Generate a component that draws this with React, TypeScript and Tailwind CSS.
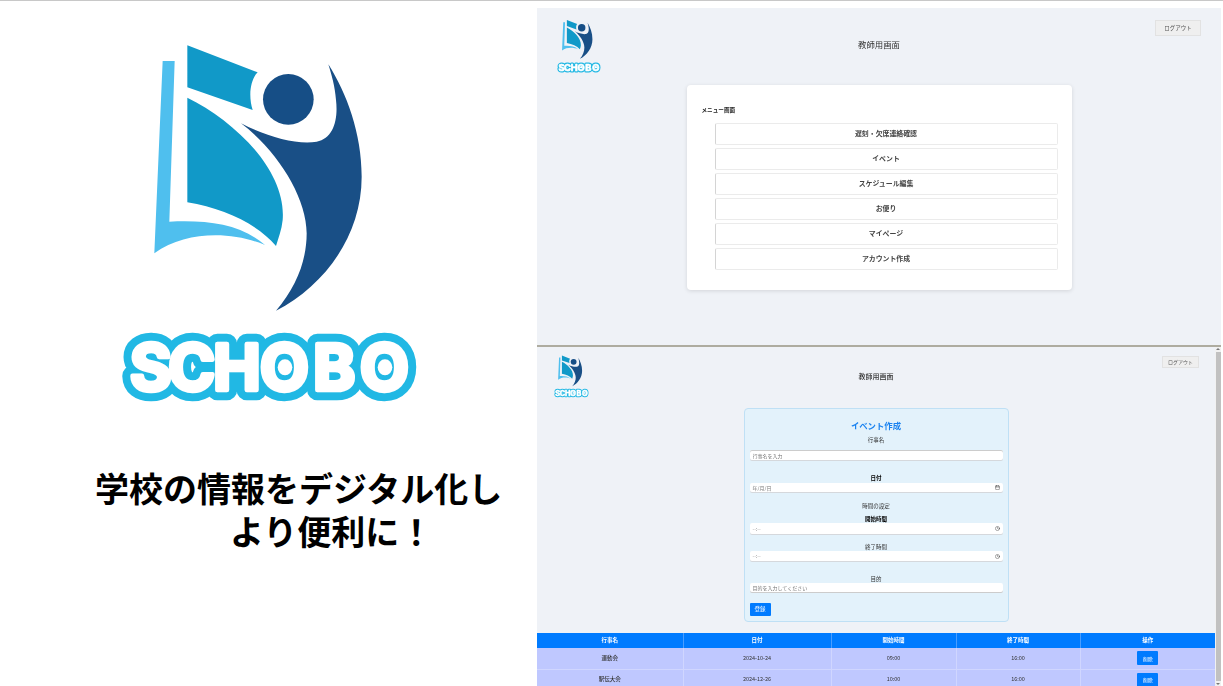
import { Calendar, Clock } from "lucide-react";
import type { ReactNode } from "react";

const menuItems = ["遅刻・欠席連絡確認", "イベント", "スケジュール編集", "お便り", "マイページ", "アカウント作成"];

const events = [
  { name: "運動会", date: "2024-10-24", start: "09:00", end: "16:00" },
  { name: "駅伝大会", date: "2024-12-26", start: "10:00", end: "16:00" },
];

// glyph left edges, so the two O's land under their white dots
const wordX = "90 205 340 480 640 780";

function Logo({ className }: { className: string }) {
  return (
    <svg viewBox="60 30 900 1140" className={className}>
      <path fill="#4fbfee" d="M188 93 L224 93 L208 575 C320 570 420 580 495 645 C400 605 260 600 163 670 Z" />
      <path fill="#1199c8" d="M262 46 L473 127 C450 150 445 200 458 240 L262 172 Z" />
      <path fill="#1199c8" d="M262 203 C400 270 560 420 548 570 C545 600 535 625 528 648 C470 580 370 535 262 517 Z" />
      <circle cx="565" cy="208" r="76" fill="#164e86" />
      <path
        fill="#194f86"
        d="M685 103 C740 190 785 310 785 440 C785 620 670 770 528 842 C590 770 620 690 620 610 C620 500 530 360 423 280 C500 320 590 345 650 335 C700 325 715 270 708 210 C705 170 695 135 685 103 Z"
      />
      <g fontSize="190" fontWeight="700" fontFamily="Inter, sans-serif" strokeLinejoin="round">
        <text aria-hidden x={wordX} y="1081" fill="#21b8e4" stroke="#21b8e4" strokeWidth="62">
          SCHOBO
        </text>
        <text x={wordX} y="1081" fill="#ffffff" stroke="#ffffff" strokeWidth="14">
          SCHOBO
        </text>
      </g>
      <ellipse cx="555" cy="1012" rx="22" ry="24" fill="#ffffff" />
      <ellipse cx="855" cy="1012" rx="22" ry="24" fill="#ffffff" />
    </svg>
  );
}

function Field({ label, className, strong, children }: { label: string; className: string; strong?: boolean; children: ReactNode }) {
  return (
    <div className={`flex flex-col ${className}`}>
      <label className={`h-2 text-center text-[5.5px] leading-2 ${strong ? "font-bold text-black" : "text-[#333]"}`}>{label}</label>
      {children}
    </div>
  );
}

function PickerInput({ text, icon, className }: { text: string; icon: ReactNode; className: string }) {
  return (
    <div className={`flex items-center justify-between rounded-[2px] bg-white px-[3px] text-[5px] text-[#777] shadow-[0_1px_0_#d5d8dc] ${className}`}>
      <span>{text}</span>
      {icon}
    </div>
  );
}

export default function App() {
  return (
    <div className="flex h-[686px] w-[1223px] flex-col overflow-hidden bg-white font-['Noto_Sans_CJK_JP',sans-serif]">
      <div className="h-px shrink-0 bg-[#c8c8c8]" />
      <div className="flex min-h-0 flex-1">
        <main className="w-[537px] shrink-0">
          <div className="pt-[39px] pl-[120px]">
            <Logo className="h-[380px] w-[300px]" />
          </div>
          <h1 className="mt-[46px] pl-[95px] text-[34px] leading-[43px] font-bold text-black">
            <div className="whitespace-nowrap">学校の情報をデジタル化し</div>
            <div className="pl-[135px]">より便利に！</div>
          </h1>
        </main>

        <div className="flex w-[684px] shrink-0 flex-col pt-[7px]">
          <section className="h-[337px] shrink-0 bg-[#eff2f7] blur-[0.35px]">
            <header className="grid h-[66px] grid-cols-[1fr_auto_1fr] items-start pt-[11px]">
              <Logo className="ml-5 h-[56px] w-11" />
              <h2 className="mt-[19px] text-[8.4px] leading-3 text-[#333]">教師用画面</h2>
              <div className="mt-[1px] flex justify-end pr-5">
                <button className="h-4 w-[46px] border border-[#e2e2e2] bg-[#efefef] text-[5.5px] text-[#555]">ログアウト</button>
              </div>
            </header>
            <div className="mx-auto mt-[11px] w-[385px] rounded bg-white pt-[21px] pr-[14px] pb-5 pl-[14px] shadow-[0_1px_4px_rgba(0,0,0,0.12)]">
              <div className="mb-[9px] ml-px h-2 text-[5.6px] leading-2 font-bold text-[#222]">メニュー画面</div>
              <div className="ml-[14px] flex flex-col gap-[3px]">
                {menuItems.map((item) => (
                  <button
                    key={item}
                    className="h-[22px] rounded-[2px] border border-[#ebebeb] border-l-[#d4d4d4] bg-white pb-[2px] text-[6.9px] font-bold text-[#444]"
                  >
                    {item}
                  </button>
                ))}
              </div>
            </div>
          </section>

          <div className="h-[2px] shrink-0 bg-[#aeaca0]" />

          <div className="flex min-h-0 flex-1">
            <section className="h-[339px] w-[678px] shrink-0 overflow-hidden bg-[#eff2f7] blur-[0.35px]">
              <header className="grid h-[53px] grid-cols-[1fr_auto_1fr] items-start pt-2">
                <Logo className="ml-[17px] h-[44px] w-[35px]" />
                <h2 className="mt-4 text-[7px] leading-[10px] font-medium text-[#333]">教師用画面</h2>
                <div className="mt-[1px] flex justify-end pr-4">
                  <button className="h-3 w-[37px] border border-[#e2e2e2] bg-[#efefef] text-[5px] text-[#555]">ログアウト</button>
                </div>
              </header>

              <form className="mx-auto mt-2 h-[214px] w-[265px] rounded border border-[#bfe0f5] bg-[#e3f2fb] px-[5px] pt-[10px]">
                <h3 className="h-3 text-center text-[8.4px] leading-3 font-bold text-[#1a82f0]">イベント作成</h3>
                <Field label="行事名" className="mt-[5px]">
                  <input
                    placeholder="行事名を入力"
                    className="mt-[6px] h-[10px] rounded-[2px] bg-white px-[3px] text-[5px] shadow-[inset_0_1px_0_#ccc,0_1px_0_#d5d8dc] placeholder:text-[#777]"
                  />
                </Field>
                <Field label="日付" strong className="mt-[14px]">
                  <PickerInput text="年/月/日" className="mt-[1px] h-[9px]" icon={<Calendar size={5} strokeWidth={2} color="#333" />} />
                </Field>
                <div className="mt-[10px] h-2 text-center text-[5.5px] leading-2 text-[#333]">時間の設定</div>
                <Field label="開始時間" strong className="mt-[5px]">
                  <PickerInput text="--:--" className="h-[11px]" icon={<Clock size={5} strokeWidth={2} color="#333" />} />
                </Field>
                <Field label="終了時間" className="mt-[9px]">
                  <PickerInput text="--:--" className="h-[10px]" icon={<Clock size={5} strokeWidth={2} color="#333" />} />
                </Field>
                <Field label="目的" className="mt-[14px]">
                  <input
                    placeholder="目的を入力してください"
                    className="h-[9px] rounded-[2px] bg-white px-[3px] text-[5px] shadow-[0_1px_0_#ccc] placeholder:text-[#777]"
                  />
                </Field>
                <button type="button" className="mt-[10px] h-[13px] w-[21px] rounded-[1px] bg-[#007bff] text-[5.5px] text-white">
                  登録
                </button>
              </form>

              <table className="mt-[11px] w-full table-fixed border-collapse text-center text-[5.5px]">
                <colgroup>
                  <col className="w-[146px]" />
                  <col className="w-[148px]" />
                  <col className="w-[125px]" />
                  <col className="w-[124px]" />
                  <col className="w-[135px]" />
                </colgroup>
                <thead className="bg-[#007bff] font-bold text-white">
                  <tr className="h-[15px]">
                    {["行事名", "日付", "開始時間", "終了時間", "操作"].map((head) => (
                      <th key={head} className="border-r border-[#4a9dff] p-0 last:border-r-0">
                        {head}
                      </th>
                    ))}
                  </tr>
                </thead>
                <tbody className="bg-[#bfc8ff] text-[#333]">
                  {events.map((event) => (
                    <tr key={event.name} className="h-[21px] border-b border-[#d0d6ff]">
                      <td className="border-r border-[#d0d6ff] p-0 font-medium">{event.name}</td>
                      <td className="border-r border-[#d0d6ff] p-0">{event.date}</td>
                      <td className="border-r border-[#d0d6ff] p-0">{event.start}</td>
                      <td className="border-r border-[#d0d6ff] p-0">{event.end}</td>
                      <td className="p-0">
                        <button className="h-[14px] w-[21px] rounded-[1px] bg-[#007bff] align-middle text-[5px] text-white">削除</button>
                      </td>
                    </tr>
                  ))}
                </tbody>
              </table>
            </section>

            <div className="flex w-[6px] shrink-0 flex-col items-center bg-[#f1f1f1] py-[1px]">
              <div className="h-0 w-0 border-x-[2px] border-b-[2px] border-x-transparent border-b-[#777]" />
              <div className="my-[2px] w-[5px] flex-1 bg-[#c1c1c1]" />
              <div className="h-0 w-0 border-x-[2px] border-t-[2px] border-x-transparent border-t-[#777]" />
            </div>
          </div>
        </div>
      </div>
    </div>
  );
}
